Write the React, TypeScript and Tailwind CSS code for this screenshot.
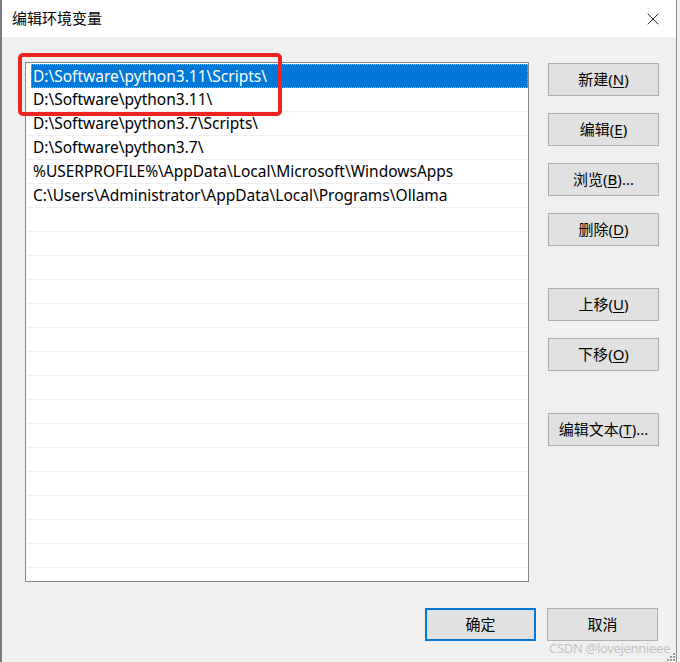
import { X } from "lucide-react";

const PATHS = [
  "D:\\Software\\python3.11\\Scripts\\",
  "D:\\Software\\python3.11\\",
  "D:\\Software\\python3.7\\Scripts\\",
  "D:\\Software\\python3.7\\",
  "%USERPROFILE%\\AppData\\Local\\Microsoft\\WindowsApps",
  "C:\\Users\\Administrator\\AppData\\Local\\Programs\\Ollama",
];

const ROW_COUNT = 21;

const WinButton = ({ label, hotkey, suffix = "", primary = false }: { label: string; hotkey?: string; suffix?: string; primary?: boolean }) => (
  <div
    className={
      "w-[111px] h-[33px] flex items-center justify-center bg-[#e1e1e1] text-[15px] text-black " +
      (primary ? "border-2 border-[#0078d7]" : "border border-[#adadad]")
    }
  >
    <span>
      {label}
      {hotkey && (
        <>
          (<u className="underline-offset-2">{hotkey}</u>)
        </>
      )}
      {suffix}
    </span>
  </div>
);

const App = () => {
  const rows = Array.from({ length: ROW_COUNT }, (_, i) => PATHS[i] ?? "");

  return (
    <div
      className="w-[680px] h-[662px] flex bg-[#f0f0f0] overflow-hidden"
      style={{ fontFamily: '"Noto Sans", "Noto Sans CJK SC", sans-serif' }}
    >
      <div className="w-[2px] bg-[#7a7a7a]"></div>
      <div className="w-[675px] flex flex-col border-r border-[#8a8a8a]">
        {/* title bar */}
        <div className="h-[37px] bg-white flex items-center justify-between pl-[10px] pr-[13px]">
          <span className="text-[15px] text-black">编辑环境变量</span>
          <X className="w-[20px] h-[20px] text-black" strokeWidth={1} />
        </div>

        {/* body */}
        <div className="relative flex-1 flex flex-col pl-[23px] pt-[25px]">
          <div className="flex gap-[19px]">
            <div className="w-[504px] h-[520px] border border-[#828790] bg-white pt-px pl-px">
              {rows.map((text, i) => (
                <div key={i} className="h-[24px] border-b border-[#f0f0f0] flex">
                  {i === 0 ? (
                    <div className="ml-[4px] flex-1 h-[24px] -mb-px bg-[#0078d7] border border-dotted border-[#f0a040] text-white text-[15.5px] leading-[22px] pl-[1px]">
                      {text}
                    </div>
                  ) : (
                    <div className="pl-[6px] text-[15.5px] leading-[23px] text-black whitespace-nowrap">{text}</div>
                  )}
                </div>
              ))}
            </div>

            <div className="flex flex-col pt-px">
              <div className="flex flex-col gap-[17px]">
                <WinButton label="新建" hotkey="N" />
                <WinButton label="编辑" hotkey="E" />
                <WinButton label="浏览" hotkey="B" suffix="..." />
                <WinButton label="删除" hotkey="D" />
              </div>
              <div className="flex flex-col gap-[17px] mt-[42px]">
                <WinButton label="上移" hotkey="U" />
                <WinButton label="下移" hotkey="O" />
              </div>
              <div className="mt-[42px]">
                <WinButton label="编辑文本" hotkey="T" suffix="..." />
              </div>
            </div>
          </div>

          <div className="flex justify-end gap-[11px] mt-[26px] pr-[18px]">
            <WinButton label="确定" primary />
            <WinButton label="取消" />
          </div>

          {/* red highlight box */}
          <div className="absolute left-[16px] top-[16px] w-[264px] h-[63px] border-[4px] border-[#ee2420] rounded-[5px]"></div>

          {/* watermark */}
          <div className="absolute right-[6px] bottom-[4px] text-[13px] text-[#c4c4c4] tracking-tight">CSDN @lovejennieee</div>
          <div className="absolute right-0 bottom-0 grid grid-cols-3 gap-px p-px">
            <span></span><span></span><span className="w-[2px] h-[2px] bg-[#9a9a9a]"></span>
            <span></span><span className="w-[2px] h-[2px] bg-[#9a9a9a]"></span><span className="w-[2px] h-[2px] bg-[#9a9a9a]"></span>
            <span className="w-[2px] h-[2px] bg-[#9a9a9a]"></span><span className="w-[2px] h-[2px] bg-[#9a9a9a]"></span><span className="w-[2px] h-[2px] bg-[#9a9a9a]"></span>
          </div>
        </div>
      </div>
    </div>
  );
};

export default App;
